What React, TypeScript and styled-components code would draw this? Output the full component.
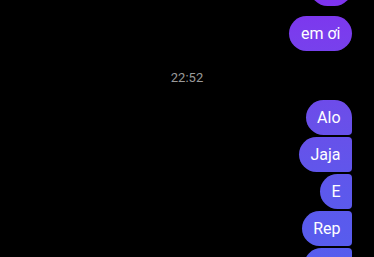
import React from "react";
import styled, { createGlobalStyle, css } from "styled-components";

const Global = createGlobalStyle`
  html, body { margin: 0; padding: 0; background: #000; overflow: hidden; }
  body { font-family: Roboto, "Noto Sans", "Liberation Sans", sans-serif; }
`;

const Screen = styled.div`
  width: 374px;
  height: 257px;
  background: #000;
  overflow: hidden;
`;

const Thread = styled.div`
  display: flex;
  flex-direction: column;
  margin-top: -29px;
  padding: 0 22px;
`;

const Group = styled.div<{ $gapAfter?: number }>`
  display: flex;
  flex-direction: column;
  align-items: flex-end;
  gap: 2px;
  margin-bottom: ${(p) => p.$gapAfter ?? 0}px;
`;

type Pos = "single" | "first" | "middle" | "last";

const radius = {
  single: css`border-radius: 18px;`,
  first: css`border-radius: 18px 18px 4px 18px;`,
  middle: css`border-radius: 18px 4px 4px 18px;`,
  last: css`border-radius: 18px 4px 18px 18px;`,
};

const Bubble = styled.div<{ $pos: Pos; $minW?: number }>`
  box-sizing: border-box;
  height: 35px;
  min-width: ${(p) => p.$minW ?? 0}px;
  padding: 8px 11.5px;
  font-size: 16px;
  line-height: 19px;
  color: #fff;
  background: linear-gradient(180deg, #7e33ef 0px, #7a3ded 35px, #6a4fe9 118px, #5d58ec 190px, #565dee 257px);
  background-attachment: fixed;
  white-space: nowrap;
  ${(p) => radius[p.$pos]}
`;

const Stamp = styled.div`
  text-align: center;
  font-size: 13px;
  line-height: 16px;
  color: #9a9a9a;
  margin: 19px 0 14px;
`;

export default function App() {
  return (
    <Screen>
      <Global />
      <Thread>
        <Group $gapAfter={10}>
          <Bubble $pos="single" $minW={42} />
        </Group>
        <Group>
          <Bubble $pos="single">em ơi</Bubble>
        </Group>
        <Stamp>22:52</Stamp>
        <Group>
          <Bubble $pos="first">Alo</Bubble>
          <Bubble $pos="middle">Jaja</Bubble>
          <Bubble $pos="middle">E</Bubble>
          <Bubble $pos="middle">Rep</Bubble>
          <Bubble $pos="last" $minW={48} />
        </Group>
      </Thread>
    </Screen>
  );
}
